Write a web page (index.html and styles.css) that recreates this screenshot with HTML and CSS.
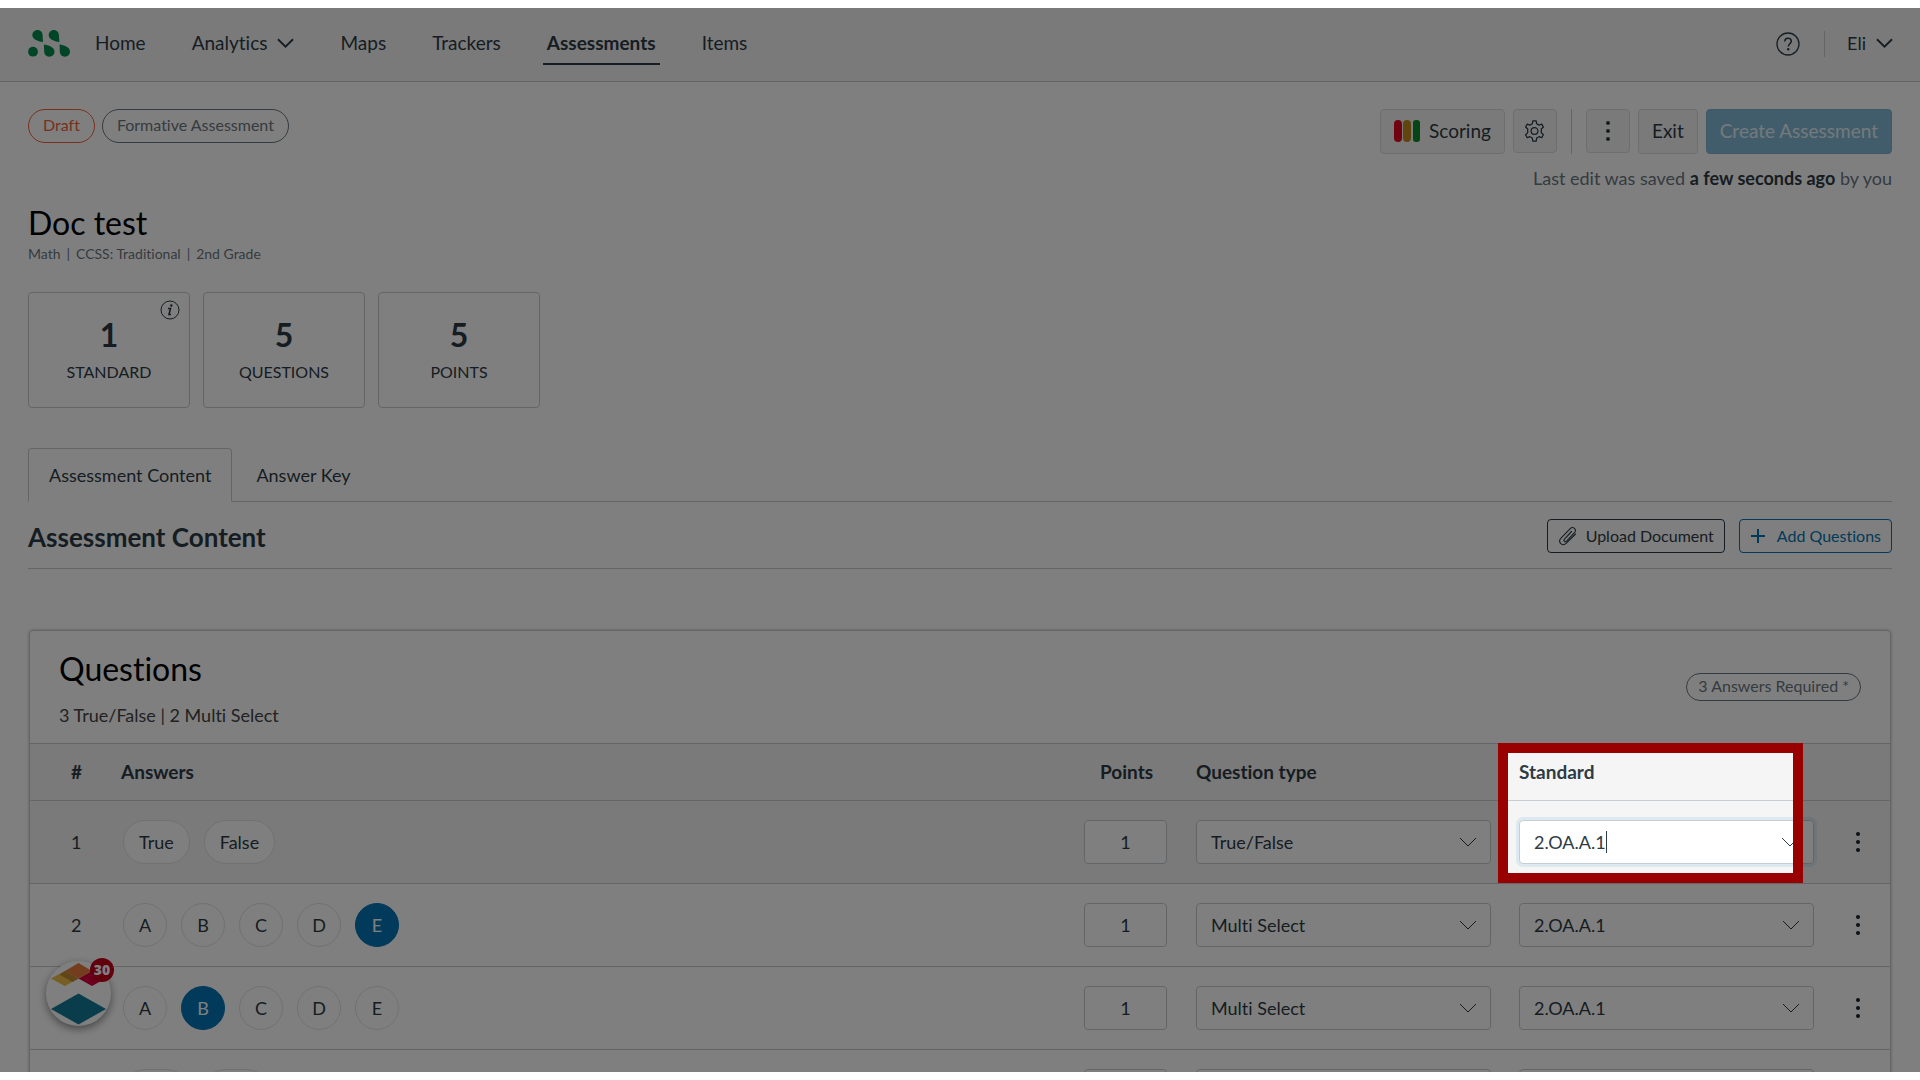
FILE: index.html
```html
<!DOCTYPE html>
<html lang="en">
<head>
<meta charset="utf-8">
<title>Doc test – Assessments</title>
<link rel="stylesheet" href="styles.css">
</head>
<body>
<svg class="sprite" aria-hidden="true">
  <symbol id="chevron" viewBox="0 0 18 12"><path d="M1 2l8 8 8-8" fill="none" stroke="currentColor"/></symbol>
  <symbol id="dots" viewBox="0 0 6 22"><g fill="currentColor"><circle cx="3" cy="3" r="2"/><circle cx="3" cy="11" r="2"/><circle cx="3" cy="19" r="2"/></g></symbol>
</svg>
<div class="frame">
  <header class="topbar">
    <a class="logo" href="#" aria-label="Mastery home">
      <svg width="42" height="28" viewBox="0 0 42 28" fill="#008a4b">
        <path d="M9.500 0C12.500 0 14.600 2.300 14.600 5.200L15 12C11 11.500 4.300 9.500 4.300 5.200 4.300 2.300 6.500 0 9.500 0z"/>
        <path d="M25.800 0C28.800 0 30.900 2.300 30.900 5.200L31.400 12C27.300 11.500 20.700 9.500 20.700 5.200 20.700 2.300 22.800 0 25.800 0z"/>
        <circle cx="5" cy="21.700" r="4.900"/>
        <path d="M15.900 14.500C20 15 26.500 17 26.500 21.500c0 2.900-2.200 5.200-5.200 5.200s-5.100-2.300-5.100-5.200z"/>
        <path d="M31.600 14.500C35.700 15 42 17 42 21.500c0 2.900-2.200 5.200-5.100 5.200-3 0-5.100-2.300-5.100-5.200z"/>
      </svg>
    </a>
    <nav class="nav">
      <a href="#">Home</a>
      <a href="#">Analytics <svg class="nav-chevron"><use href="#chevron"/></svg></a>
      <a href="#">Maps</a>
      <a href="#">Trackers</a>
      <a href="#" class="current">Assessments</a>
      <a href="#">Items</a>
    </nav>
    <div class="account">
      <button class="plain" aria-label="Help">
        <svg width="24" height="24" viewBox="0 0 24 24" fill="none" stroke="currentColor"><circle cx="12" cy="12" r="11" stroke-width="1.300"/><path d="M8.800 9.500C8.800 7.500 10 6.200 12 6.200s3.300 1.200 3.300 3.100c0 2.300-3 2.600-3 5.200" stroke-width="1.500"/><circle cx="12.200" cy="17.300" r="1.200" fill="currentColor" stroke="none"/></svg>
      </button>
      <span class="account-rule"></span>
      <button class="plain user">Eli <svg class="nav-chevron"><use href="#chevron"/></svg></button>
    </div>
  </header>

  <main class="page">
    <section class="intro">
      <div class="pills">
        <span class="pill draft">Draft</span>
        <span class="pill">Formative Assessment</span>
      </div>
      <div class="toolbar-block">
        <div class="toolbar">
          <button class="btn scoring"><svg width="26" height="22" viewBox="0 0 26 22"><rect width="8" height="22" rx="4" fill="#e0061f"/><rect x="9" width="8" height="22" rx="4" fill="#c08a1c"/><rect x="19" width="7" height="22" rx="3" fill="#0b8a2c"/></svg>Scoring</button>
          <button class="btn square" aria-label="Settings"><svg width="21" height="22" viewBox="0 0 22 24" fill="none" stroke="currentColor" stroke-width="1.400" stroke-linejoin="round"><path d="M9.200 1h3.600l.6 3.100 2.500 1.500 3-1.100 1.800 3.200L18.400 9.900v3.900l2.300 2.300-1.800 3.200-3-1.100-2.500 1.500-.6 3.300H9.200l-.6-3.300-2.500-1.500-3 1.100-1.800-3.200 2.300-2.300V9.900L1.300 7.700l1.800-3.200 3 1.100 2.500-1.500z"/><circle cx="11" cy="12" r="3.700"/></svg></button>
          <span class="toolbar-rule"></span>
          <button class="btn square" aria-label="More actions"><svg class="dots"><use href="#dots"/></svg></button>
          <button class="btn">Exit</button>
          <button class="btn primary">Create Assessment</button>
        </div>
        <p class="saved">Last edit was saved <strong>a few seconds ago</strong> by you</p>
      </div>
    </section>

    <h1 class="title">Doc test</h1>
    <p class="meta"><span>Math</span><span>|</span><span>CCSS: Traditional</span><span>|</span><span>2nd Grade</span></p>

    <div class="stats">
      <div class="stat"><strong>1</strong><span>STANDARD</span>
        <svg class="info" width="20" height="20" viewBox="0 0 20 20" fill="none" stroke="currentColor"><circle cx="10" cy="10" r="9"/><path d="M8 8.500h2.500L9 14.500h2" stroke-width="1.600"/><circle cx="11.300" cy="5.500" r="1.200" fill="currentColor" stroke="none"/></svg>
      </div>
      <div class="stat"><strong>5</strong><span>QUESTIONS</span></div>
      <div class="stat"><strong>5</strong><span>POINTS</span></div>
    </div>

    <div class="tabs">
      <button class="tab selected">Assessment Content</button>
      <button class="tab">Answer Key</button>
    </div>

    <div class="section-head">
      <h2>Assessment Content</h2>
      <div class="section-actions">
        <button class="btn-outline"><svg width="20" height="20" viewBox="0 0 20 20" fill="none" stroke="currentColor" stroke-width="1.100" stroke-linecap="round"><path d="M13.500 5.500l-7 7.500c-1.500 1.700.6 3.600 2.100 2.100l7.900-8.500c2.800-3.200-1.500-6.800-4.300-4L3 12c-3.800 4.400 1.600 9 5.400 5.200L17.500 8"/></svg>Upload Document</button>
        <button class="btn-outline blue"><svg width="16" height="16" viewBox="0 0 16 16" stroke="currentColor" stroke-width="2"><path d="M8 1v14M1 8h14"/></svg>Add Questions</button>
      </div>
    </div>

    <section class="card">
      <div class="card-head">
        <div>
          <h3>Questions</h3>
          <p>3 True/False | 2 Multi Select</p>
        </div>
        <span class="pill required">3 Answers Required *</span>
      </div>
      <table class="questions">
        <colgroup><col class="c-num"><col><col class="c-points"><col class="c-field"><col class="c-field"><col class="c-menu"></colgroup>
        <thead>
          <tr><th class="num">#</th><th>Answers</th><th class="points">Points</th><th>Question type</th><th>Standard</th><th></th></tr>
        </thead>
        <tbody>
          <tr class="active">
            <td class="num">1</td>
            <td><div class="answers"><button class="answer word">True</button><button class="answer word">False</button></div></td>
            <td><input class="field points-field" aria-label="Points" value="1"></td>
            <td><div class="select-box"><select class="field" aria-label="Question type"><option>True/False</option></select><svg class="field-chevron"><use href="#chevron"/></svg></div></td>
            <td><div class="field combo"><input aria-label="Standard" value="2.OA.A.1"><span class="caret"></span><svg class="combo-chevron"><use href="#chevron"/></svg></div></td>
            <td><button class="plain menu" aria-label="Row actions"><svg class="dots"><use href="#dots"/></svg></button></td>
          </tr>
          <tr>
            <td class="num">2</td>
            <td><div class="answers"><button class="answer">A</button><button class="answer">B</button><button class="answer">C</button><button class="answer">D</button><button class="answer chosen">E</button></div></td>
            <td><input class="field points-field" aria-label="Points" value="1"></td>
            <td><div class="select-box"><select class="field" aria-label="Question type"><option>Multi Select</option></select><svg class="field-chevron"><use href="#chevron"/></svg></div></td>
            <td><div class="select-box"><select class="field" aria-label="Standard"><option>2.OA.A.1</option></select><svg class="field-chevron"><use href="#chevron"/></svg></div></td>
            <td><button class="plain menu" aria-label="Row actions"><svg class="dots"><use href="#dots"/></svg></button></td>
          </tr>
          <tr>
            <td class="num"></td>
            <td><div class="answers"><button class="answer">A</button><button class="answer chosen">B</button><button class="answer">C</button><button class="answer">D</button><button class="answer">E</button></div></td>
            <td><input class="field points-field" aria-label="Points" value="1"></td>
            <td><div class="select-box"><select class="field" aria-label="Question type"><option>Multi Select</option></select><svg class="field-chevron"><use href="#chevron"/></svg></div></td>
            <td><div class="select-box"><select class="field" aria-label="Standard"><option>2.OA.A.1</option></select><svg class="field-chevron"><use href="#chevron"/></svg></div></td>
            <td><button class="plain menu" aria-label="Row actions"><svg class="dots"><use href="#dots"/></svg></button></td>
          </tr>
          <tr>
            <td class="num"></td>
            <td><div class="answers"><button class="answer word" aria-label="True"></button><button class="answer word" aria-label="False"></button></div></td>
            <td><input class="field points-field" aria-label="Points"></td>
            <td><div class="select-box"><select class="field" aria-label="Question type"></select></div></td>
            <td><div class="select-box"><select class="field" aria-label="Standard"></select></div></td>
            <td></td>
          </tr>
        </tbody>
      </table>
    </section>
  </main>

  <button class="helper" aria-label="Notifications">
    <svg width="65" height="65" viewBox="0 0 65 65"><path d="M5 17.500L19 10l13.500 7.500L19 25z" fill="#ecbc48"/><path d="M32.500 17.500L46 10l13.500 7.500L46 25z" fill="#d6003c"/><path d="M19 10l13.500-8L46 10l-13.500 7.500z" fill="#e87a3c"/><path d="M19 10l13.500 7.500-6 3.500-13-7.500z" fill="#c08a30"/><path d="M5 48l27.500-15.500L60 48 32.500 63.500z" fill="#127a96"/></svg>
    <span class="count">30</span>
  </button>
  <div class="spotlight"></div>
</div>
</body>
</html>
```
FILE: styles.css
```css
* { box-sizing: border-box; }
body { margin: 0; padding: 8px 0; background: #fff; font-family: Lato, sans-serif; font-size: 18px; line-height: 24px; font-variant-ligatures: none; color: #2d3b45; }
h1, h2, h3, p { margin: 0; }
button, input, select { font: inherit; font-variant-ligatures: none; color: inherit; margin: 0; }
svg { display: block; flex: none; }
.sprite { position: absolute; width: 0; height: 0; }

/* The frame clips the page and the dimmed area of the spotlight */
.frame { position: relative; height: calc(100vh - 16px); overflow: hidden; }

.topbar { display: flex; align-items: center; height: 74px; padding: 0 24px 2px 28px; background: #f5f5f5; border-bottom: 1px solid #c7cdd1; font-size: 19px; }
.nav { display: flex; gap: 38px; margin-left: 21px; }
.nav a { display: flex; align-items: center; gap: 10px; height: 42px; padding: 0 4px 2px; color: inherit; text-decoration: none; border-bottom: 2px solid transparent; border-top: 2px solid transparent; }
.nav .current { font-weight: 700; border-bottom-color: #2d3b45; }
.nav-chevron { width: 17px; height: 12px; stroke-width: 2; }
.account { display: flex; align-items: center; margin-left: auto; }
.account-rule { width: 1px; height: 26px; margin: 0 22px 0 24px; background: #c7cdd1; }
.plain { display: flex; align-items: center; justify-content: center; padding: 0; border: 0; background: none; }
.user { gap: 10px; padding: 0 3px 2px 0; font-size: 18px; }

.page { padding: 27px 28px 0; }
.intro { display: flex; justify-content: space-between; align-items: flex-start; }
.pills { display: flex; gap: 7px; }
.pill { padding: 3px 14px 5px; border: 1px solid #6b7780; border-radius: 17px; font-size: 16px; color: #6b7780; }
.pill.draft { border-color: #f0613a; color: #f0613a; }
.toolbar { display: flex; align-items: flex-start; justify-content: flex-end; gap: 8px; }
.btn { display: flex; align-items: center; justify-content: center; height: 45px; padding: 0 13px 2px; border: 1px solid #d8dcde; border-radius: 4px; background: #f5f5f5; font-size: 19px; }
.scoring { gap: 9px; }
.square { width: 44px; height: 44px; padding: 0; }
.toolbar-rule { width: 1px; height: 45px; margin: 0 6px; background: #c7cdd1; }
.primary { border-color: #7cb3cf; background: #82bbd8; color: #e8f2f7; }
.dots { width: 6px; height: 22px; }
.saved { margin-top: 12px; text-align: right; color: #6b7780; }
.saved strong { color: #2d3b45; }

.title { margin-top: 13px; font-size: 32px; line-height: 40px; font-weight: 400; color: #000; }
.meta { display: flex; gap: 6px; font-size: 14px; line-height: 22px; color: #6b7780; }
.stats { display: flex; gap: 13px; margin-top: 27px; }
.stat { position: relative; display: flex; flex-direction: column; align-items: center; gap: 5px; width: 162px; height: 116px; padding-top: 22px; border: 1px solid #c7cdd1; border-radius: 4px; font-size: 16px; }
.stat strong { font-size: 32px; line-height: 40px; }
.info { position: absolute; top: 7px; right: 9px; }

.tabs { display: flex; margin-top: 40px; border-bottom: 1px solid #c7cdd1; }
.tab { height: 54px; margin-bottom: -1px; padding: 0 20px; border: 1px solid transparent; border-radius: 4px 4px 0 0; background: none; }
.tab + .tab { padding-left: 23px; }
.selected { border-color: #c7cdd1; border-bottom-color: #fff; background: #fff; }
.section-head { display: flex; align-items: center; justify-content: space-between; height: 67px; padding-top: 4px; border-bottom: 1px solid #c7cdd1; }
.section-head h2 { font-size: 26px; line-height: 32px; }
.section-actions { display: flex; gap: 14px; padding-bottom: 2px; }
.btn-outline { display: flex; align-items: center; gap: 8px; height: 34px; padding: 0 10px; border: 1px solid #2d3b45; border-radius: 4px; background: #fff; font-size: 16px; }
.blue { gap: 11px; border-color: #0374b5; color: #0374b5; }

.card { margin: 61px 1px 0; border: 1px solid #c7cdd1; border-radius: 4px; box-shadow: 0 0 3px rgba(0, 0, 0, .3); }
.card-head { display: flex; justify-content: space-between; padding: 18px 29px 16px; }
.card-head h3 { font-size: 32px; line-height: 40px; font-weight: 400; color: #000; }
.card-head p { margin-top: 14px; color: #444; }
.required { align-self: center; margin-bottom: 2px; padding: 0 11px 2px; }

.questions { width: 100%; table-layout: fixed; border-collapse: separate; border-spacing: 0; }
.questions th, .questions td { padding: 0; text-align: left; border-top: 1px solid #c7cdd1; }
.questions th { height: 57px; background: #f5f5f5; font-size: 19px; }
.questions td { height: 83px; }
.active td { background: #f5f5f5; }
.c-num { width: 91px; }
.c-points { width: 112px; }
.c-field { width: 323px; }
.c-menu { width: 48px; }
.questions .num { padding-left: 41px; }
.questions .points { padding-left: 16px; }
.answers { display: flex; gap: 14px; padding-left: 2px; }
.answer { width: 44px; height: 44px; padding: 0; border: 1px solid #e0e2e4; border-radius: 22px; background: #fff; }
.word { width: auto; min-width: 66px; padding: 0 15px; }
.chosen { border-color: #0374b5; background: #0374b5; color: #fff; }
.field { display: block; width: 295px; height: 44px; padding: 0 14px; border: 1px solid #c7cdd1; border-radius: 4px; background: #fff; appearance: none; }
.points-field { width: 83px; text-align: center; }
.select-box { position: relative; width: 295px; }
.field-chevron { position: absolute; top: 16px; right: 14px; width: 18px; height: 12px; pointer-events: none; }
.combo { display: flex; align-items: center; box-shadow: 0 0 0 3px #dce9f1; }
.combo input { field-sizing: content; padding: 0; border: 0; background: none; outline: none; }
.caret { width: 1px; height: 22px; background: #2d3b45; }
.combo-chevron { width: 18px; height: 12px; margin-left: auto; }
.menu { width: 32px; height: 44px; color: #16222b; }

.helper { position: absolute; left: 46px; bottom: 46px; width: 65px; height: 65px; padding: 0; border: 0; border-radius: 50%; background: #fff; box-shadow: 0 3px 8px rgba(0, 0, 0, .45); }
.count { position: absolute; top: -3px; right: -3px; width: 24px; height: 24px; border-radius: 12px; background: #c4001a; color: #fff; font: 800 14px/24px "Open Sans", sans-serif; }
.spotlight { position: absolute; top: 735px; right: 117px; width: 305px; height: 140px; border: 10px solid #900; box-shadow: 0 0 0 9999px rgba(0, 0, 0, .5); pointer-events: none; }
```
